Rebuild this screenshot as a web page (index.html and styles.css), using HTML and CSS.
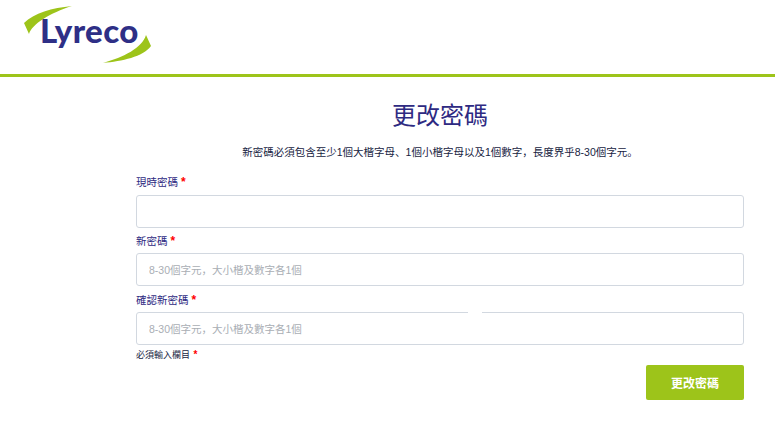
FILE: index.html
```html
<!DOCTYPE html>
<html lang="zh">
<head>
<meta charset="utf-8">
<title>更改密碼</title>
<link rel="stylesheet" href="styles.css">
</head>
<body>
<header class="header">
  <div class="logo">
    <svg class="logo-art" width="155" height="66" viewBox="0 0 155 66" aria-hidden="true">
      <path class="swoosh" d="M72 6 C52 8 34 13 24 23 L29 34 C32 24 50 13 72 6 Z"/>
      <path class="swoosh" d="M103 63 C122 61 143 57 151 46 L146 35 C142 48 124 57 103 63 Z"/>
      <text class="logo-text" x="40" y="43">Lyreco</text>
    </svg>
  </div>
</header>
<main class="main">
  <h1 class="title">更改密碼</h1>
  <p class="intro">新密碼必須包含至少1個大楷字母、1個小楷字母以及1個數字，長度界乎8-30個字元。</p>
  <form class="form">
    <div class="field">
      <label class="label label-first">現時密碼 <span class="req">*</span></label>
      <input class="input" type="password">
    </div>
    <div class="field">
      <label class="label">新密碼 <span class="req">*</span></label>
      <input class="input" type="password" placeholder="8-30個字元，大小楷及數字各1個">
    </div>
    <div class="field">
      <label class="label">確認新密碼 <span class="req">*</span></label>
      <input class="input" type="password" placeholder="8-30個字元，大小楷及數字各1個">
      <span class="notch"></span>
    </div>
    <p class="note">必須輸入欄目 <span class="req">*</span></p>
    <div class="actions">
      <button class="button" type="button">更改密碼</button>
    </div>
  </form>
</main>
</body>
</html>
```
FILE: styles.css
```css
* { box-sizing: border-box; }
html, body { margin: 0; padding: 0; }
body {
  background: #fff;
  font-family: "Liberation Sans", "Noto Sans CJK SC", sans-serif;
  color: #2e2a82;
  height: 427px;
  overflow: hidden;
}
.header {
  height: 77px;
  border-bottom: 3px solid #9dc41a;
}
.logo { height: 74px; }
.logo-art { display: block; overflow: visible; }
.swoosh { fill: #9dc41a; }
.logo-text {
  font-family: "Lato", sans-serif;
  font-weight: 900;
  font-size: 33px;
  letter-spacing: 0.4px;
  fill: #2e2f86;
}
.main { width: 608px; margin: 0 0 0 136px; }
.title {
  margin: 0;
  padding-top: 21px;
  font-size: 24px;
  font-weight: 400;
  line-height: 36px;
  text-align: center;
  color: #2e2a82;
}
.intro {
  margin: 10px 0 0;
  font-size: 10.5px;
  line-height: 16px;
  text-align: center;
  color: #17233f;
}
.form { margin-top: 13px; }
.field { position: relative; }
.field + .field { margin-top: 3px; }
.field + .field + .field { margin-top: 4px; }
.label {
  display: block;
  height: 22px;
  font-size: 10.5px;
  line-height: 14px;
  padding-top: 3px;
  color: #2e2a82;
}
.label-first { padding-top: 2px; }
.req { color: #f00; font-size: 12px; font-weight: 700; }
.input {
  display: block;
  width: 100%;
  height: 33px;
  border: 1px solid #d2d8e0;
  border-radius: 3px;
  padding: 0 12px;
  background: #fff;
  font-family: inherit;
  font-size: 10.5px;
  outline: none;
}
.input::placeholder { color: #a9aeb4; opacity: 1; }
.notch {
  position: absolute;
  left: 332px;
  top: 21px;
  width: 14px;
  height: 3px;
  background: #fff;
}
.note {
  margin: 4px 0 0;
  font-size: 9px;
  line-height: 12px;
  color: #17233f;
}
.note .req { font-size: 10px; margin-left: 1px; }
.actions { display: flex; justify-content: flex-end; margin-top: 4px; }
.button {
  width: 98px;
  height: 35px;
  border: 0;
  border-radius: 2px;
  background: #9dc41a;
  color: #fff;
  font-family: inherit;
  font-size: 12px;
  font-weight: 700;
}
```
